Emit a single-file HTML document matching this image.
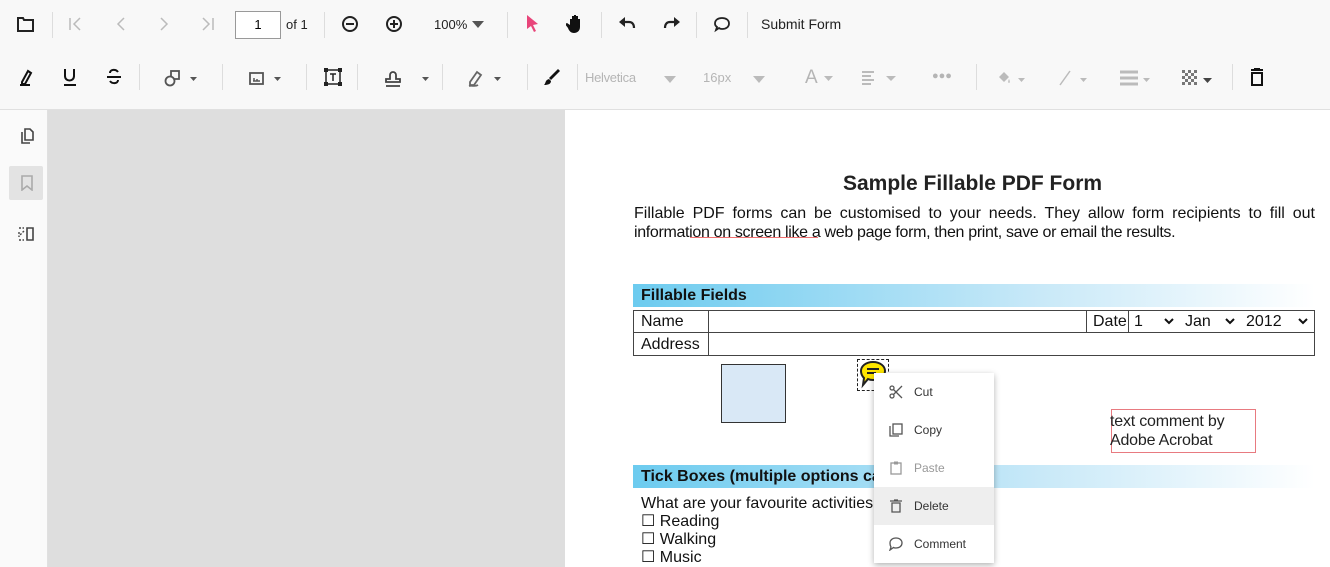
<!DOCTYPE html>
<html><head><style>
*{margin:0;padding:0;box-sizing:border-box}
body{width:1330px;height:567px;overflow:hidden;position:relative;font-family:"Liberation Sans",sans-serif;background:#fff}
.a{position:absolute}
.tb{left:0;top:0;width:1330px;height:110px;background:#f8f8f8;border-bottom:1px solid #e0e0e0}
.sep{position:absolute;width:1px;background:#ddd}
.ic{position:absolute;color:#222}
.t{position:absolute;font-size:14px;color:#222;font-family:"Liberation Sans",sans-serif}
.t.g{color:#b5b5b5}
.menu{left:874px;top:373px;width:120px;height:190px;background:#fff;box-shadow:0 2px 6px rgba(0,0,0,.3)}
.mi{position:absolute;left:0;width:120px;height:38px;font-size:12px;color:#333}
.mi span{position:absolute;left:40px;top:12px}
.mi svg{position:absolute;left:15px;top:12px}
</style></head><body>
<div class="a tb"></div>
<!-- row1 -->
<svg class="ic" style="left:17px;top:16px" width="17" height="16" viewBox="0 0 17 16"><path d="M1 2h5l1 2h9v11H1z" fill="none" stroke="#222" stroke-width="2"/></svg>
<div class="sep" style="left:52px;top:12px;height:26px"></div>
<svg class="ic" style="left:68px;top:16px" width="14" height="16"><path d="M2 2v12M12 2L6 8l6 6" stroke="#bbb" fill="none" stroke-width="1.5"/></svg>
<svg class="ic" style="left:115px;top:16px" width="12" height="16"><path d="M9 2L3 8l6 6" stroke="#bbb" fill="none" stroke-width="1.5"/></svg>
<svg class="ic" style="left:158px;top:16px" width="12" height="16"><path d="M3 2l6 6-6 6" stroke="#bbb" fill="none" stroke-width="1.5"/></svg>
<svg class="ic" style="left:201px;top:16px" width="14" height="16"><path d="M2 2l6 6-6 6M12 2v12" stroke="#bbb" fill="none" stroke-width="1.5"/></svg>
<div class="a" style="left:235px;top:11px;width:46px;height:28px;border:1px solid #999;background:#fff;font-size:13px;text-align:center;line-height:26px">1</div>
<div class="t" style="left:286px;top:17px;font-size:13px">of 1</div>
<div class="sep" style="left:324px;top:12px;height:26px"></div>
<svg class="ic" style="left:341px;top:15px" width="18" height="18"><circle cx="9" cy="9" r="7" fill="none" stroke="#222" stroke-width="2"/><path d="M5 9h8" stroke="#222" stroke-width="2"/></svg>
<svg class="ic" style="left:385px;top:15px" width="18" height="18"><circle cx="9" cy="9" r="7" fill="none" stroke="#222" stroke-width="2"/><path d="M5 9h8M9 5v8" stroke="#222" stroke-width="2"/></svg>
<div class="t" style="left:434px;top:17px;font-size:13px">100%</div>
<svg class="ic" style="left:472px;top:21px" width="12" height="7"><path d="M0 0h12L6 7z" fill="#555"/></svg>
<div class="sep" style="left:507px;top:12px;height:26px"></div>
<svg class="ic" style="left:525px;top:14px" width="14" height="19"><path d="M2 1l11 9-5 1 3 6-2 1-3-6-4 3z" fill="#e8457a"/></svg>
<svg class="ic" style="left:566px;top:13px" width="20" height="21"><path d="M4 10V6h2v5V3h2v8V2h2v9V3h2v9V6h2v8c0 4-3 6-6 6s-5-2-6-5l-3-4 2-1 3 2z" fill="#111"/></svg>
<div class="sep" style="left:601px;top:12px;height:26px"></div>
<svg class="ic" style="left:619px;top:16px" width="18" height="14"><path d="M4 6h6c3 0 5 2 5 6" stroke="#222" fill="none" stroke-width="2.2"/><path d="M0 6l6-5v10z" fill="#222"/></svg>
<svg class="ic" style="left:662px;top:16px" width="18" height="14"><path d="M14 6H8c-3 0-5 2-5 6" stroke="#222" fill="none" stroke-width="2.2"/><path d="M18 6l-6-5v10z" fill="#222"/></svg>
<div class="sep" style="left:696px;top:12px;height:26px"></div>
<svg class="ic" style="left:713px;top:16px" width="18" height="17"><path d="M9 2c4 0 7 2 7 5.5S13 13 9 13c-1 0-2 0-3-1L3 14l1-3C2.5 10 2 9 2 7.5 2 4 5 2 9 2z" fill="none" stroke="#222" stroke-width="1.8"/></svg>
<div class="sep" style="left:747px;top:12px;height:26px"></div>
<div class="t" style="left:761px;top:16px">Submit Form</div>
<!-- row2 -->
<svg class="ic" style="left:18px;top:68px" width="16" height="18"><path d="M4 14l6-11 3 2-6 11H4zM2 17h10" stroke="#111" fill="none" stroke-width="2"/></svg>
<svg class="ic" style="left:62px;top:68px" width="16" height="18"><path d="M3 1v7c0 6 9 6 9 0V1M2 17h12" stroke="#111" fill="none" stroke-width="2"/></svg>
<svg class="ic" style="left:106px;top:68px" width="16" height="18"><path d="M12 4C10 1 4 1 4 5M1 9h14M4 13c2 3 8 3 8-1" stroke="#111" fill="none" stroke-width="2"/></svg>
<div class="sep" style="left:139px;top:64px;height:26px"></div>
<svg class="ic" style="left:164px;top:69px" width="34" height="18"><rect x="7" y="2" width="8" height="8" fill="none" stroke="#555" stroke-width="1.8"/><circle cx="6" cy="12" r="4.5" fill="#f8f8f8" stroke="#555" stroke-width="1.8"/><path d="M26 8h7l-3.5 4z" fill="#555"/></svg>
<div class="sep" style="left:222px;top:64px;height:26px"></div>
<svg class="ic" style="left:249px;top:72px" width="34" height="14"><rect x="1" y="1" width="13" height="11" fill="none" stroke="#555" stroke-width="1.8"/><path d="M4 9h7M5 6v3M8 7v2" stroke="#555" stroke-width="1.5"/><path d="M25 5h7l-3.5 4z" fill="#555"/></svg>
<div class="sep" style="left:306px;top:64px;height:26px"></div>
<svg class="ic" style="left:324px;top:68px" width="18" height="18"><rect x="2" y="2" width="14" height="14" fill="none" stroke="#222" stroke-width="1.5"/><path d="M6 6h6M9 6v7" stroke="#222" stroke-width="1.5"/><path d="M0 0h4v4H0zM14 0h4v4h-4zM0 14h4v4H0zM14 14h4v4h-4z" fill="#222"/></svg>
<div class="sep" style="left:357px;top:64px;height:26px"></div>
<svg class="ic" style="left:384px;top:68px" width="46" height="20"><path d="M6 11V7a3 3 0 116 0v4h4v3H2v-3z M2 18h14" fill="none" stroke="#444" stroke-width="1.8"/><path d="M38 9h7l-3.5 4z" fill="#555"/></svg>
<div class="sep" style="left:442px;top:64px;height:26px"></div>
<svg class="ic" style="left:467px;top:68px" width="36" height="20"><path d="M3 14l7-10 4 3-7 10H3zM2 18c3-1 6 1 9-1" fill="none" stroke="#666" stroke-width="1.8"/><path d="M27 9h7l-3.5 4z" fill="#555"/></svg>
<div class="sep" style="left:527px;top:64px;height:26px"></div>
<svg class="ic" style="left:543px;top:68px" width="18" height="18"><path d="M15 1l2 2-9 9-2-2zM6 11l2 2c0 3-3 4-7 4 2-2 1-5 5-6z" fill="#111"/></svg>
<div class="sep" style="left:577px;top:64px;height:26px"></div>
<div class="t g" style="left:585px;top:70px;font-size:13px;letter-spacing:-0.3px">Helvetica</div>
<svg class="ic" style="left:664px;top:76px" width="12" height="7"><path d="M0 0h12L6 7z" fill="#bbb"/></svg>
<div class="t g" style="left:703px;top:70px;font-size:13px">16px</div>
<svg class="ic" style="left:753px;top:76px" width="12" height="7"><path d="M0 0h12L6 7z" fill="#bbb"/></svg>
<div class="t g" style="left:805px;top:67px;font-size:19px">A</div>
<svg class="ic" style="left:824px;top:76px" width="9" height="5"><path d="M0 0h9L4.5 5z" fill="#bbb"/></svg>
<svg class="ic" style="left:862px;top:71px" width="36" height="16"><path d="M0 1h12M0 5h9M0 9h12M0 13h9" stroke="#bbb" stroke-width="2"/><path d="M24 5h10l-5 5z" fill="#bbb"/></svg>
<div class="t g" style="left:932px;top:70px;font-size:11px;letter-spacing:0px">●●●</div>
<div class="sep" style="left:976px;top:64px;height:26px"></div>
<svg class="ic" style="left:996px;top:70px" width="32" height="16"><path d="M3 7l5-5 5 5-5 5zM13 9c1 2 1 4 0 4s-1-2 0-4" fill="#bbb"/><path d="M22 8h7l-3.5 4z" fill="#bbb"/></svg>
<svg class="ic" style="left:1058px;top:70px" width="32" height="16"><path d="M2 15L12 1" stroke="#bbb" stroke-width="1.5"/><path d="M22 8h7l-3.5 4z" fill="#bbb"/></svg>
<svg class="ic" style="left:1120px;top:70px" width="32" height="18"><path d="M0 2h18M0 8h18M0 14h18" stroke="#bbb" stroke-width="3"/><path d="M23 8h7l-3.5 4z" fill="#bbb"/></svg>
<svg class="ic" style="left:1182px;top:70px" width="32" height="16"><g fill="#777"><rect x="0" y="0" width="3" height="3"/><rect x="6" y="0" width="3" height="3"/><rect x="12" y="0" width="3" height="3"/><rect x="3" y="3" width="3" height="3"/><rect x="9" y="3" width="3" height="3"/><rect x="0" y="6" width="3" height="3"/><rect x="6" y="6" width="3" height="3"/><rect x="12" y="6" width="3" height="3"/><rect x="3" y="9" width="3" height="3"/><rect x="9" y="9" width="3" height="3"/><rect x="0" y="12" width="3" height="3"/><rect x="6" y="12" width="3" height="3"/><rect x="12" y="12" width="3" height="3"/></g><path d="M21 8h9l-4.5 5z" fill="#444"/></svg>
<div class="sep" style="left:1232px;top:64px;height:26px"></div>
<svg class="ic" style="left:1249px;top:68px" width="16" height="18"><path d="M2 2h12M5 1h6M3 5h10v12H3z" fill="none" stroke="#111" stroke-width="2"/></svg>
<!-- sidebar -->
<div class="a" style="left:0;top:110px;width:48px;height:457px;background:#fafafa;border-right:1px solid #e0e0e0"></div>
<svg class="ic" style="left:19px;top:127px" width="16" height="18"><path d="M6 2h5l3 3v8H6z" fill="none" stroke="#444" stroke-width="1.6"/><path d="M3 5v11h8" fill="none" stroke="#444" stroke-width="1.6"/></svg>
<div class="a" style="left:9px;top:166px;width:34px;height:34px;background:#e3e3e3;border-radius:2px"></div>
<svg class="ic" style="left:20px;top:175px" width="14" height="16"><path d="M2 1h10v14l-5-4-5 4z" fill="none" stroke="#aaa" stroke-width="1.6"/></svg>
<svg class="ic" style="left:18px;top:226px" width="18" height="16"><path d="M9 2h6v12H9z" fill="none" stroke="#444" stroke-width="1.6"/><path d="M1 2h5M1 14h5M1 6v5M6 5L2 9" stroke="#444" stroke-width="1.4" stroke-dasharray="2 1.5" fill="none"/></svg>
<div class="a" style="left:48px;top:110px;width:517px;height:457px;background:#dedede"></div>
<!-- page -->
<div class="a" style="left:565px;top:110px;width:765px;height:457px;background:#fff"></div>
<div class="a" style="left:843px;top:172px;font-size:21px;font-weight:bold;color:#222">Sample Fillable PDF Form</div>
<div class="a" style="left:634px;top:204px;width:681px;font-size:16px;color:#111;text-align:justify;text-align-last:justify;line-height:19px">Fillable PDF forms can be customised to your needs. They allow form recipients to fill out</div>
<div class="a" style="left:634px;top:223px;font-size:16px;color:#111;line-height:19px;letter-spacing:-0.33px">information on screen like a web page form, then print, save or email the results.</div>
<div class="a" style="left:690px;top:237px;width:128px;height:1px;background:#f07070"></div>
<div class="a" style="left:633px;top:284px;width:682px;height:23px;background:linear-gradient(90deg,#6ccbef,#c9e9f8 60%,#fff)"></div>
<div class="a" style="left:641px;top:287px;font-size:16px;font-weight:bold;color:#111">Fillable Fields</div>
<div class="a" style="left:633px;top:310px;width:682px;height:46px;border:1px solid #444"></div>
<div class="a" style="left:633px;top:332px;width:682px;height:1px;background:#444"></div>
<div class="a" style="left:708px;top:310px;width:1px;height:46px;background:#444"></div>
<div class="a" style="left:1086px;top:310px;width:1px;height:23px;background:#444"></div>
<div class="a" style="left:1128px;top:310px;width:1px;height:23px;background:#444"></div>
<div class="a" style="left:641px;top:313px;font-size:16px;color:#111">Name</div>
<div class="a" style="left:641px;top:336px;font-size:16px;color:#111">Address</div>
<div class="a" style="left:1093px;top:313px;font-size:16px;color:#111">Date</div>
<div class="a" style="left:1134px;top:313px;font-size:16px;color:#111">1</div>
<div class="a" style="left:1185px;top:313px;font-size:16px;color:#111">Jan</div>
<div class="a" style="left:1246px;top:313px;font-size:16px;color:#111">2012</div>
<svg class="a" style="left:1164px;top:318px" width="10" height="7"><path d="M1 1l4 4 4-4" stroke="#111" stroke-width="2" fill="none"/></svg>
<svg class="a" style="left:1225px;top:318px" width="10" height="7"><path d="M1 1l4 4 4-4" stroke="#111" stroke-width="2" fill="none"/></svg>
<svg class="a" style="left:1298px;top:318px" width="10" height="7"><path d="M1 1l4 4 4-4" stroke="#111" stroke-width="2" fill="none"/></svg>
<div class="a" style="left:721px;top:364px;width:65px;height:59px;background:#d9e8f6;border:1px solid #333"></div>
<div class="a" style="left:857px;top:359px;width:32px;height:32px;border:1px dashed #222"></div>
<svg class="a" style="left:858px;top:360px" width="30" height="30"><path d="M15 2c7 0 12 4 12 9s-5 9-12 9c-2 0-3 0-5-1l-5 6 1-7C4 16 3 14 3 11 3 6 8 2 15 2z" fill="#ffe600" stroke="#222" stroke-width="2"/><path d="M9 9h12M9 13h9" stroke="#222" stroke-width="2"/></svg>
<div class="a" style="left:1111px;top:409px;width:145px;height:44px;border:1px solid #e87a80"></div>
<div class="a" style="left:1110px;top:412px;font-size:16px;color:#222;line-height:19px;letter-spacing:-0.2px">text comment by<br>Adobe Acrobat</div>
<div class="a" style="left:633px;top:465px;width:682px;height:23px;background:linear-gradient(90deg,#6ccbef,#c9e9f8 60%,#fff)"></div>
<div class="a" style="left:641px;top:468px;font-size:16px;font-weight:bold;color:#111">Tick Boxes (multiple options ca</div>
<div class="a" style="left:641px;top:495px;font-size:16px;color:#111;line-height:18px">What are your favourite activities</div>
<div class="a" style="left:641px;top:513px;font-size:16px;color:#111;line-height:18px">☐ Reading<br>☐ Walking<br>☐ Music</div>
<!-- menu -->
<div class="a menu">
<div class="mi" style="top:0"><svg width="14" height="14"><circle cx="3" cy="3" r="2" fill="none" stroke="#555" stroke-width="1.3"/><circle cx="3" cy="11" r="2" fill="none" stroke="#555" stroke-width="1.3"/><path d="M4.5 4.5L13 13M4.5 9.5L13 1" stroke="#555" stroke-width="1.3"/></svg><span>Cut</span></div>
<div class="mi" style="top:38px"><svg width="14" height="14"><path d="M1 3v10h9" fill="none" stroke="#555" stroke-width="1.3"/><rect x="4" y="1" width="9" height="10" fill="none" stroke="#555" stroke-width="1.3"/></svg><span>Copy</span></div>
<div class="mi" style="top:76px;color:#999"><svg width="14" height="14"><rect x="2" y="2" width="10" height="11" fill="none" stroke="#999" stroke-width="1.3"/><rect x="5" y="0.5" width="4" height="3" fill="#999"/></svg><span>Paste</span></div>
<div class="mi" style="top:114px;background:#eee"><svg width="14" height="14"><path d="M1 2h12M5 1h4M3 4h8v9H3z" fill="none" stroke="#555" stroke-width="1.3"/></svg><span>Delete</span></div>
<div class="mi" style="top:152px"><svg width="14" height="14"><path d="M7 1c3.5 0 6 2 6 5s-2.5 5-6 5c-1 0-2 0-2.5-.5L1 13l1-3C1.3 9 1 7.5 1 6c0-3 2.5-5 6-5z" fill="none" stroke="#555" stroke-width="1.3"/></svg><span>Comment</span></div>
</div>
</body></html>
